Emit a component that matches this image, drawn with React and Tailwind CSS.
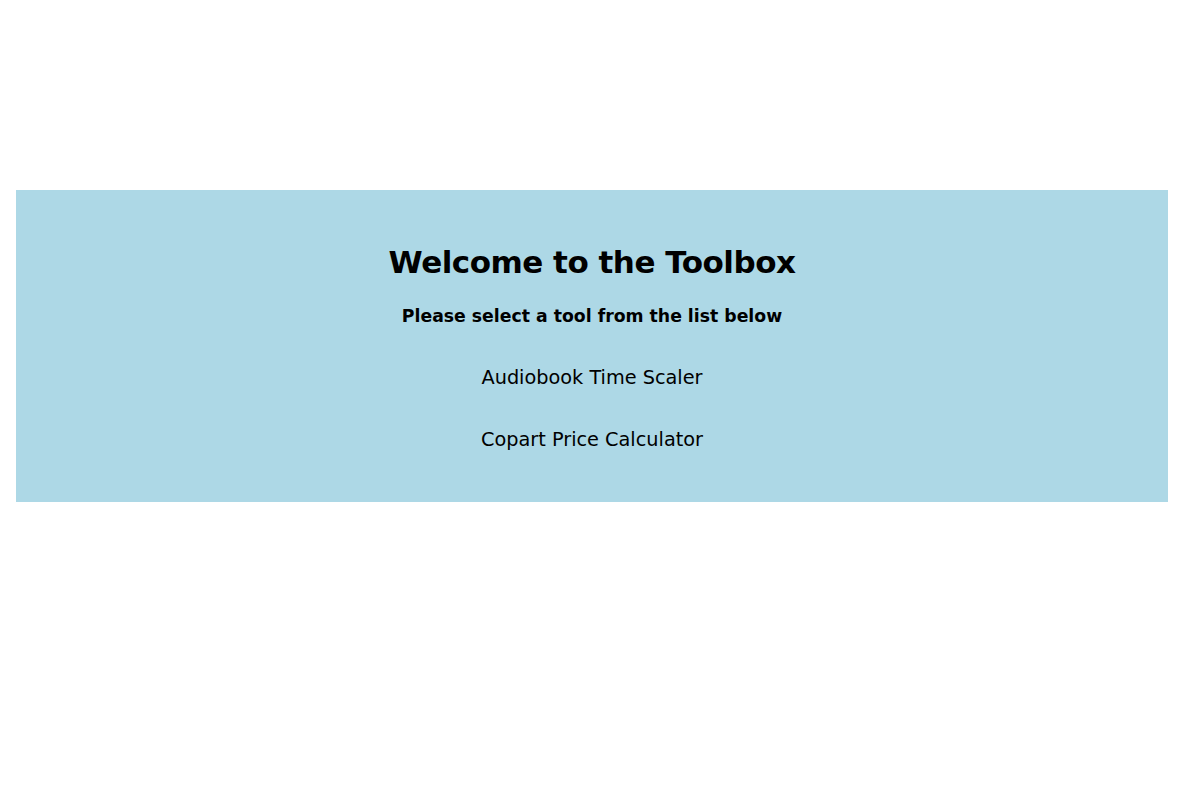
export default function App() {
  const tools = ['Audiobook Time Scaler', 'Copart Price Calculator']

  return (
    <div className="min-h-[796px] bg-white pt-[190px] pl-4 pr-[26px] font-['DejaVu_Sans',sans-serif] text-black">
      <div className="bg-[#add8e6] h-[312px] pt-[52px] flex flex-col items-center">
        <h1 className="text-[31px] leading-[40px] font-bold tracking-[-0.5px]">Welcome to the Toolbox</h1>
        <h3 className="mt-[22px] text-[17.3px] leading-[24px] font-bold">Please select a tool from the list below</h3>
        <ul className="mt-[38px] flex flex-col items-center gap-[37px]">
          {tools.map((t) => (
            <li key={t}>
              <a href="#" className="text-[19.3px] leading-[24px]">{t}</a>
            </li>
          ))}
        </ul>
      </div>
    </div>
  )
}
